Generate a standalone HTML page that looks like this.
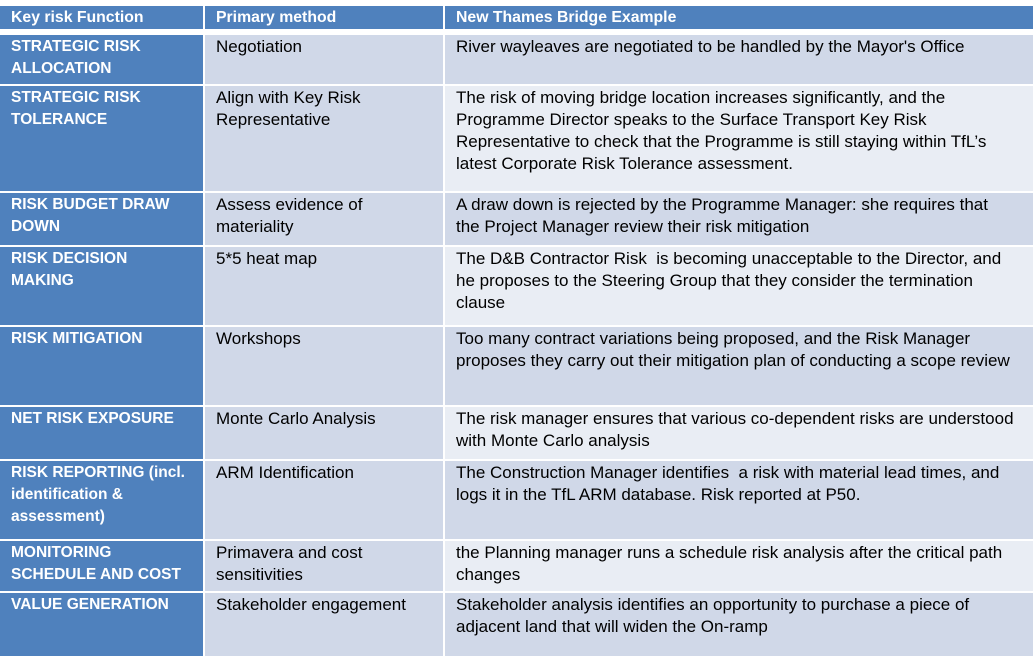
<!DOCTYPE html>
<html><head><meta charset="utf-8"><style>
body{margin:0;width:1035px;height:658px;background:#fff;position:relative;overflow:hidden;font-family:"Liberation Sans",sans-serif;}
.c{position:absolute;box-sizing:border-box;padding:1px 0 0 11px;font-size:17px;line-height:22px;white-space:nowrap;color:#000;}
.h{background:#4f81bd;color:#fff;font-weight:bold;padding-top:1px;font-size:15.8px;}
.k{background:#4f81bd;color:#fff;font-weight:bold;font-size:15.5px;}
.a{background:#d0d8e8;}
.b{background:#e9edf4;}
</style></head><body>
<div class="c h" style="left:0;top:6px;width:203px;height:23px">Key risk Function</div>
<div class="c h" style="left:205px;top:6px;width:238px;height:23px">Primary method</div>
<div class="c h" style="left:445px;top:6px;width:588px;height:23px">New Thames Bridge Example</div>

<div class="c k" style="left:0;top:35px;width:203px;height:49px">STRATEGIC RISK<br>ALLOCATION</div>
<div class="c a" style="left:205px;top:35px;width:238px;height:49px">Negotiation</div>
<div class="c a" style="left:445px;top:35px;width:588px;height:49px">River wayleaves are negotiated to be handled by the Mayor's Office</div>

<div class="c k" style="left:0;top:86px;width:203px;height:105px">STRATEGIC RISK<br>TOLERANCE</div>
<div class="c a" style="left:205px;top:86px;width:238px;height:105px">Align with Key Risk<br>Representative</div>
<div class="c b" style="left:445px;top:86px;width:588px;height:105px">The risk of moving bridge location increases significantly, and the<br>Programme Director speaks to the Surface Transport Key Risk<br>Representative to check that the Programme is still staying within TfL’s<br>latest Corporate Risk Tolerance assessment.</div>

<div class="c k" style="left:0;top:193px;width:203px;height:52px">RISK BUDGET DRAW<br>DOWN</div>
<div class="c a" style="left:205px;top:193px;width:238px;height:52px">Assess evidence of<br>materiality</div>
<div class="c a" style="left:445px;top:193px;width:588px;height:52px">A draw down is rejected by the Programme Manager: she requires that<br>the Project Manager review their risk mitigation</div>

<div class="c k" style="left:0;top:247px;width:203px;height:78px">RISK DECISION<br>MAKING</div>
<div class="c a" style="left:205px;top:247px;width:238px;height:78px">5*5 heat map</div>
<div class="c b" style="left:445px;top:247px;width:588px;height:78px">The D&amp;B Contractor Risk &nbsp;is becoming unacceptable to the Director, and<br>he proposes to the Steering Group that they consider the termination<br>clause</div>

<div class="c k" style="left:0;top:327px;width:203px;height:78px">RISK MITIGATION</div>
<div class="c a" style="left:205px;top:327px;width:238px;height:78px">Workshops</div>
<div class="c a" style="left:445px;top:327px;width:588px;height:78px">Too many contract variations being proposed, and the Risk Manager<br>proposes they carry out their mitigation plan of conducting a scope review</div>

<div class="c k" style="left:0;top:407px;width:203px;height:52px">NET RISK EXPOSURE</div>
<div class="c a" style="left:205px;top:407px;width:238px;height:52px">Monte Carlo Analysis</div>
<div class="c b" style="left:445px;top:407px;width:588px;height:52px">The risk manager ensures that various co-dependent risks are understood<br>with Monte Carlo analysis</div>

<div class="c k" style="left:0;top:461px;width:203px;height:78px">RISK REPORTING (incl.<br>identification &amp;<br>assessment)</div>
<div class="c a" style="left:205px;top:461px;width:238px;height:78px">ARM Identification</div>
<div class="c a" style="left:445px;top:461px;width:588px;height:78px">The Construction Manager identifies &nbsp;a risk with material lead times, and<br>logs it in the TfL ARM database. Risk reported at P50.</div>

<div class="c k" style="left:0;top:541px;width:203px;height:50px">MONITORING<br>SCHEDULE AND COST</div>
<div class="c a" style="left:205px;top:541px;width:238px;height:50px">Primavera and cost<br>sensitivities</div>
<div class="c b" style="left:445px;top:541px;width:588px;height:50px">the Planning manager runs a schedule risk analysis after the critical path<br>changes</div>

<div class="c k" style="left:0;top:593px;width:203px;height:63px">VALUE GENERATION</div>
<div class="c a" style="left:205px;top:593px;width:238px;height:63px">Stakeholder engagement</div>
<div class="c a" style="left:445px;top:593px;width:588px;height:63px">Stakeholder analysis identifies an opportunity to purchase a piece of<br>adjacent land that will widen the On-ramp</div>
</body></html>
